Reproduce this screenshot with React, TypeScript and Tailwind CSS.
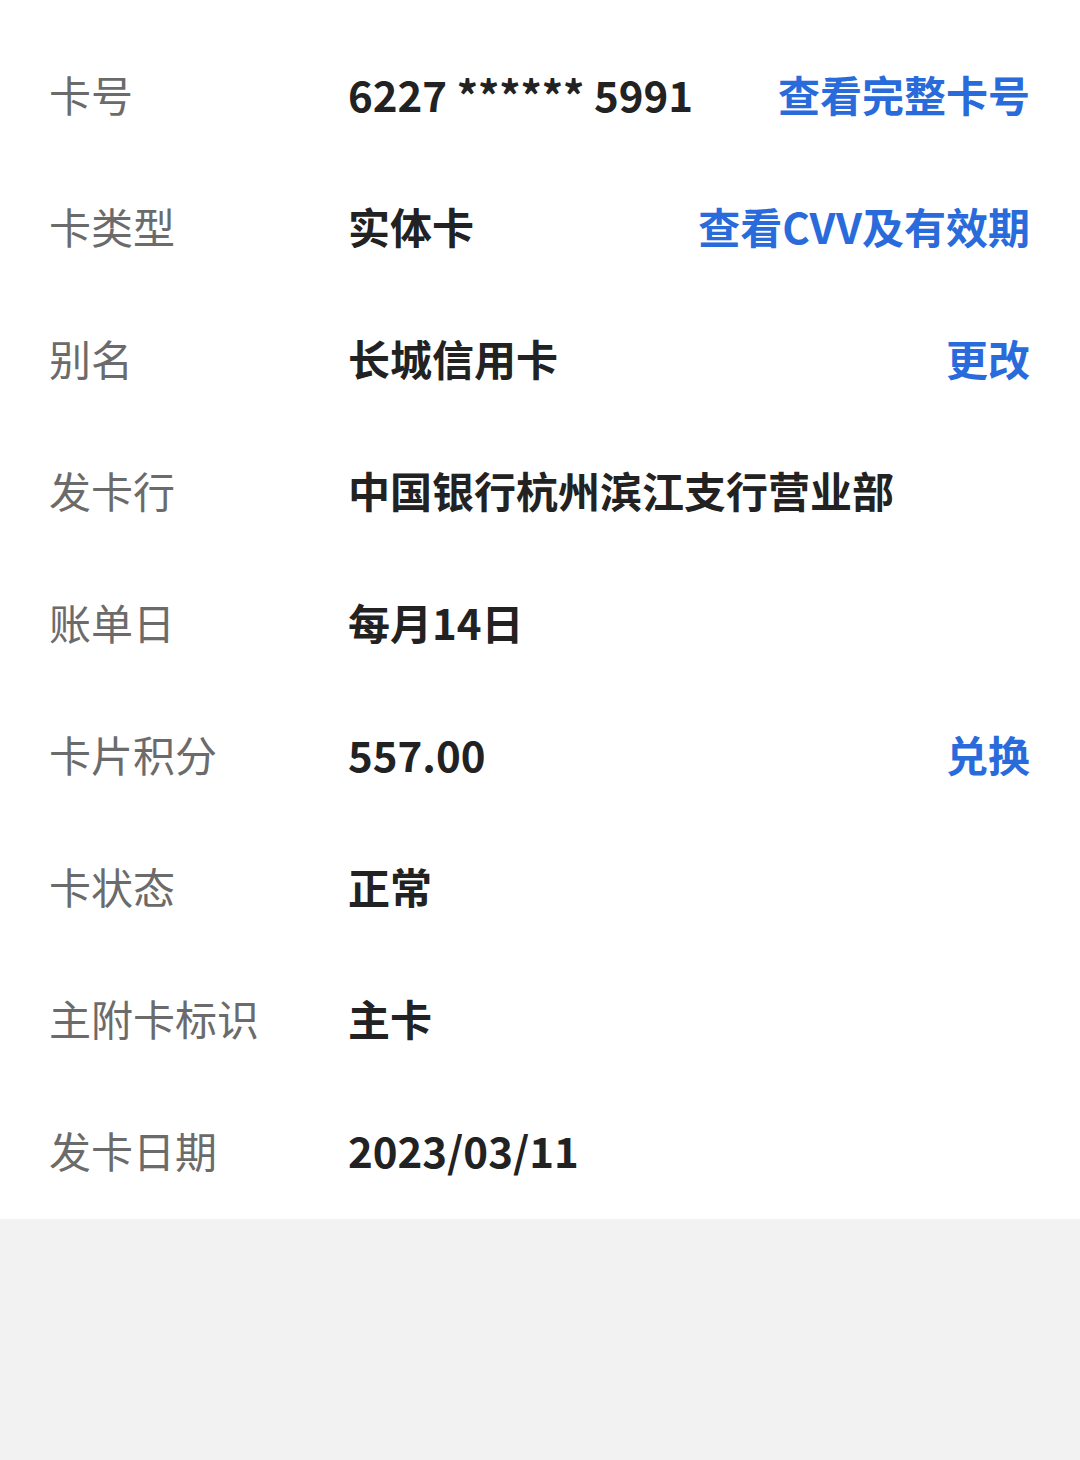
const rows: { label: string; value: string; action?: string }[] = [
  { label: "卡号", value: "6227 ****** 5991", action: "查看完整卡号" },
  { label: "卡类型", value: "实体卡", action: "查看CVV及有效期" },
  { label: "别名", value: "长城信用卡", action: "更改" },
  { label: "发卡行", value: "中国银行杭州滨江支行营业部" },
  { label: "账单日", value: "每月14日" },
  { label: "卡片积分", value: "557.00", action: "兑换" },
  { label: "卡状态", value: "正常" },
  { label: "主附卡标识", value: "主卡" },
  { label: "发卡日期", value: "2023/03/11" },
];

export default function App() {
  return (
    <div
      className="min-h-[1460px] w-[1080px] bg-[#f2f2f2]"
      style={{ fontFamily: '"Noto Sans CJK SC", "Noto Sans", sans-serif' }}
    >
      <div className="bg-white pt-[28px] pb-[3px] pl-[49px] pr-[50px]">
        {rows.map((r) => (
          <div key={r.label} className="flex h-[132px] items-center text-[42px] leading-none">
            <div className="w-[299px] shrink-0 text-[#6b6b6b]">{r.label}</div>
            <div className="flex-1 font-bold text-[#222222]">{r.value}</div>
            {r.action && (
              <button type="button" className="font-bold text-[#2a6bdc]">
                {r.action}
              </button>
            )}
          </div>
        ))}
      </div>
    </div>
  );
}
